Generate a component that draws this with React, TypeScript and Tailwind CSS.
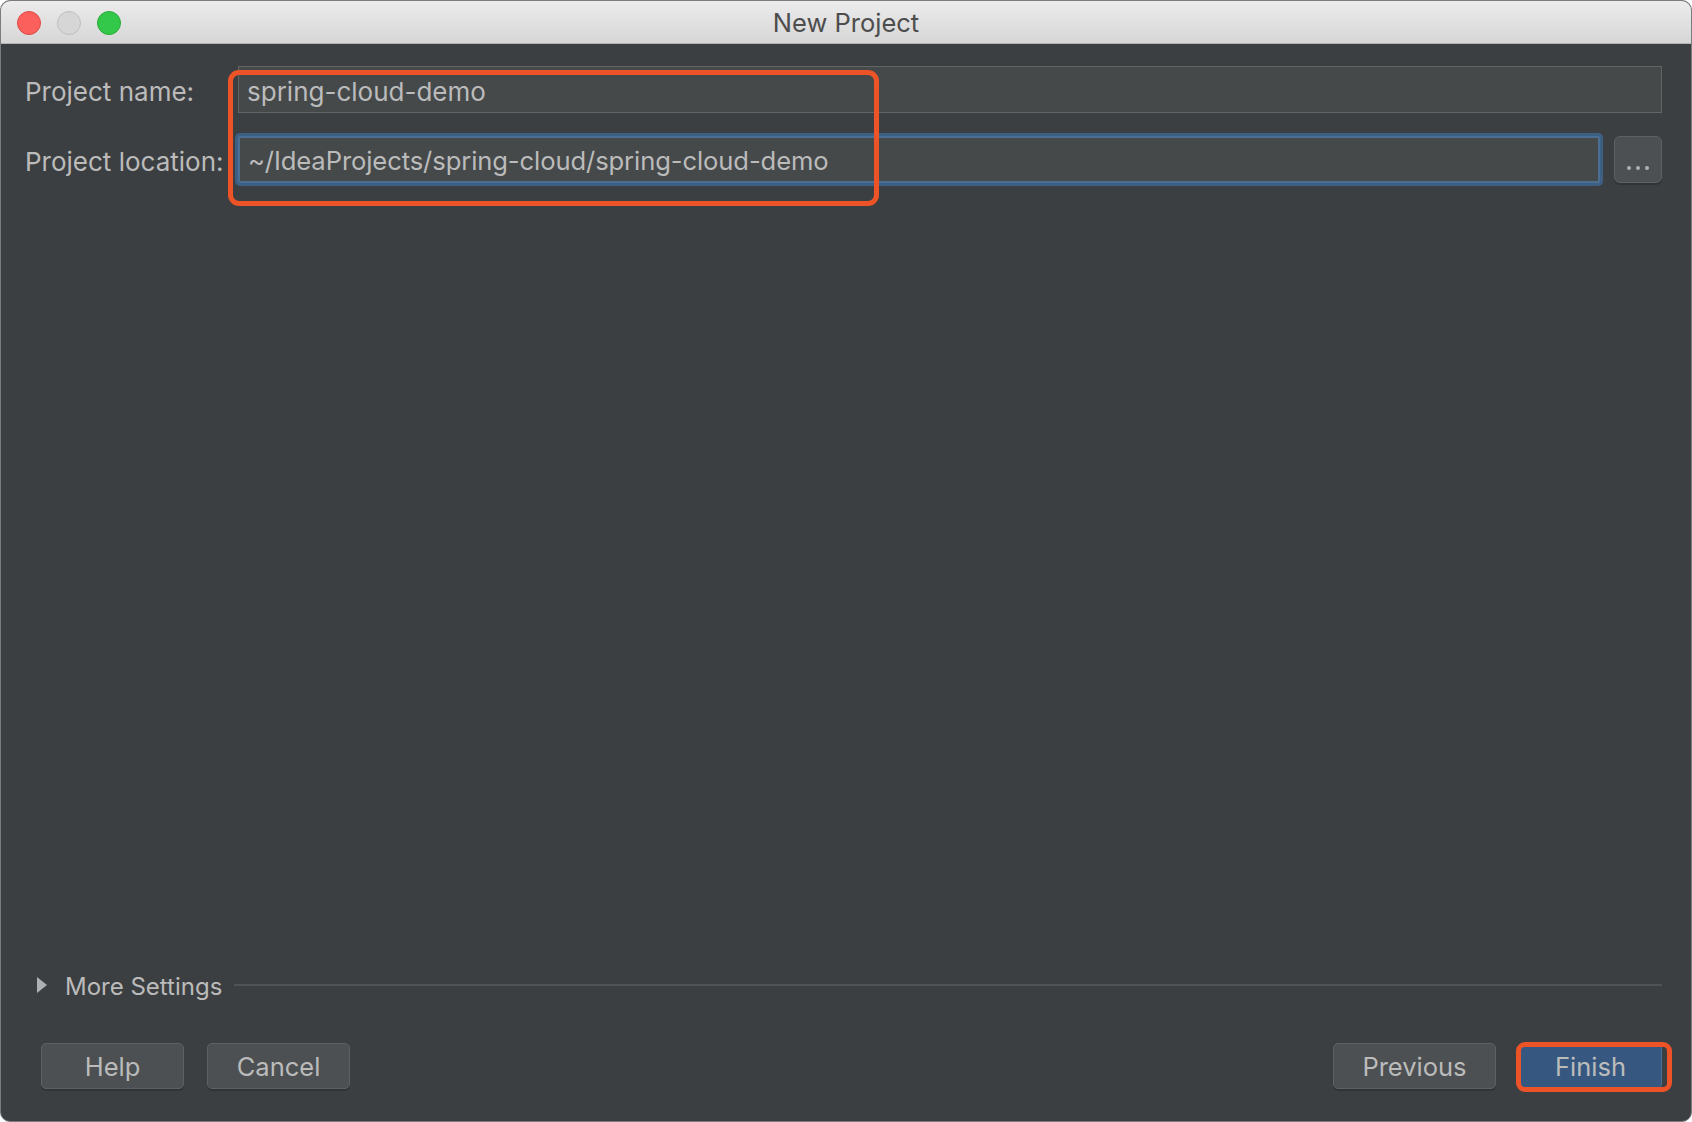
import React from "react";

const font = { fontFamily: "Inter, 'Liberation Sans', sans-serif" };

function TrafficLights() {
  return (
    <div className="absolute left-[16px] top-[10px] flex gap-[16px]">
      <span className="w-[24px] h-[24px] rounded-full bg-[#fc605c] border border-[#de4a44]" />
      <span className="w-[24px] h-[24px] rounded-full bg-[#d6d6d6] border border-[#c0c0c0]" />
      <span className="w-[24px] h-[24px] rounded-full bg-[#34c84a] border border-[#25ab35]" />
    </div>
  );
}

function DialogButton({ label, primary, className }: { label: string; primary?: boolean; className?: string }) {
  return (
    <button
      className={`h-[46px] rounded-[5px] border-[1.5px] text-[25.5px] text-[#bbbbbb] pt-[2px] shadow-[0_2px_0_rgba(0,0,0,0.18)] ${
        primary ? "bg-[#365880] border-[#4a6f8f]" : "bg-[#4c5052] border-[#5e6162]"
      } ${className ?? ""}`}
    >
      {label}
    </button>
  );
}

export default function App() {
  return (
    <div className="w-[1692px] h-[1122px] bg-white" style={font}>
      <div className="h-full flex flex-col rounded-[10px] overflow-hidden border border-[#7a7c7e] bg-[#3c3f41]">
        {/* Title bar */}
        <div className="relative h-[43px] shrink-0 bg-gradient-to-b from-[#ececec] to-[#d6d6d6] border-b border-[#b3b3b3] flex items-center justify-center">
          <TrafficLights />
          <span className="text-[25.5px] text-[#4d4d4d] pt-[3px]">New Project</span>
        </div>

        {/* Form */}
        <div className="relative pl-[24px] pr-[29px] pt-[22px]">
          <div className="flex items-center h-[47px]">
            <div className="w-[213px] text-[26px] text-[#bbbbbb] pt-[3px]">Project name:</div>
            <div className="flex-1 h-full bg-[#45494a] border-[1.5px] border-[#646464] flex items-center px-[8px] pt-[3px] text-[26px] text-[#bbbbbb]">
              spring-cloud-demo
            </div>
          </div>
          <div className="flex items-center h-[47px] mt-[23px]">
            <div className="w-[213px] text-[26px] text-[#bbbbbb] pt-[3px]">Project location:</div>
            <div className="flex-1 h-full bg-[#45494a] border-2 border-[#4b6e93] shadow-[0_0_0_3px_#3d5f84] rounded-[2px] flex items-center px-[8px] pt-[3px] text-[25.6px] tracking-[-0.1px] text-[#bbbbbb]">
              ~/IdeaProjects/spring-cloud/spring-cloud-demo
            </div>
            <button className="ml-[14px] w-[48px] h-[47px] rounded-[6px] bg-[#4c5052] border-[1.5px] border-[#5e6162] shadow-[0_2px_0_rgba(0,0,0,0.18)] flex items-end justify-center pb-[12px] gap-[5px]">
              <span className="w-[4px] h-[4px] rounded-full bg-[#aeb0b2]" />
              <span className="w-[4px] h-[4px] rounded-full bg-[#aeb0b2]" />
              <span className="w-[4px] h-[4px] rounded-full bg-[#aeb0b2]" />
            </button>
          </div>
          {/* annotation */}
          <div className="absolute left-[227px] top-[26px] w-[651px] h-[136px] border-[5px] border-[#ec5427] rounded-[11px] pointer-events-none" />
        </div>

        <div className="flex-1" />

        {/* More settings */}
        <div className="flex items-center pl-[36px] pr-[29px] h-[30px]">
          <svg width="10" height="16" viewBox="0 0 10 16">
            <path d="M0 0 L10 8 L0 16 Z" fill="#aeb0b2" />
          </svg>
          <span className="ml-[18px] text-[24px] text-[#bbbbbb] pt-[3px]">More Settings</span>
          <div className="flex-1 ml-[12px] h-[2px] bg-[#505354]" />
        </div>

        {/* Buttons */}
        <div className="flex items-center pl-[40px] pr-[29px] mt-[43px] mb-[32px]">
          <DialogButton label="Help" className="w-[143px]" />
          <DialogButton label="Cancel" className="w-[143px] ml-[23px]" />
          <div className="flex-1" />
          <DialogButton label="Previous" className="w-[163px]" />
          <div className="relative ml-[23px]">
            <DialogButton label="Finish" primary className="w-[143px]" />
            <div className="absolute -left-[3px] -top-[1px] -right-[10px] -bottom-[3px] border-[5px] border-[#ec5427] rounded-[9px] pointer-events-none" />
          </div>
        </div>
      </div>
    </div>
  );
}
